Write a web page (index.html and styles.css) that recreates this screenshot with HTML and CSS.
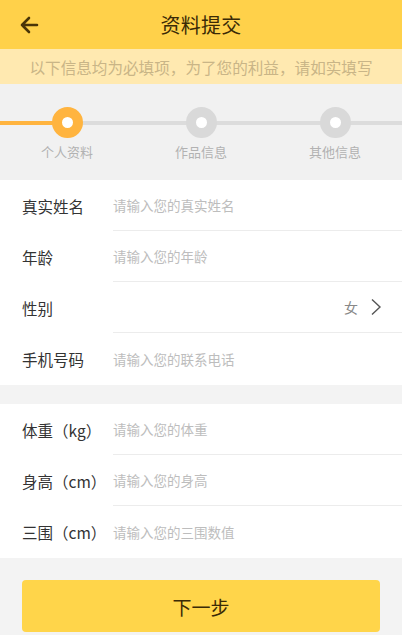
FILE: index.html
```html
<!DOCTYPE html>
<html lang="zh">
<head>
<meta charset="utf-8">
<title>资料提交</title>
<link rel="stylesheet" href="styles.css">
</head>
<body>
<div class="page">
  <header class="topbar">
    <span class="back">
      <svg width="20" height="18" viewBox="0 0 20 18"><path d="M18 9H3M10 2L3 9l7 7" fill="none" stroke="#4a3508" stroke-width="2.6" stroke-linecap="round" stroke-linejoin="round"/></svg>
    </span>
    <h1 class="title">资料提交</h1>
  </header>
  <div class="notice">以下信息均为必填项，为了您的利益，请如实填写</div>
  <div class="steps">
    <div class="step active"><span class="dot"></span><span class="step-label">个人资料</span></div>
    <div class="step"><span class="dot"></span><span class="step-label">作品信息</span></div>
    <div class="step"><span class="dot"></span><span class="step-label">其他信息</span></div>
  </div>
  <section class="group">
    <div class="row"><span class="label">真实姓名</span><span class="field ph">请输入您的真实姓名</span></div>
    <div class="row"><span class="label">年龄</span><span class="field ph">请输入您的年龄</span></div>
    <div class="row"><span class="label">性别</span><span class="field select"><span class="val">女</span><svg width="12" height="18" viewBox="0 0 12 18"><path d="M2 1.5l8 7.5-8 7.5" fill="none" stroke="#555" stroke-width="1.4"/></svg></span></div>
    <div class="row"><span class="label">手机号码</span><span class="field ph">请输入您的联系电话</span></div>
  </section>
  <section class="group second">
    <div class="row"><span class="label">体重（kg）</span><span class="field ph">请输入您的体重</span></div>
    <div class="row"><span class="label">身高（cm）</span><span class="field ph">请输入您的身高</span></div>
    <div class="row"><span class="label">三围（cm）</span><span class="field ph">请输入您的三围数值</span></div>
  </section>
  <div class="actions">
    <button class="next">下一步</button>
  </div>
</div>
</body>
</html>
```
FILE: styles.css
```css
* { box-sizing: border-box; }
html, body { margin: 0; padding: 0; }
body {
  font-family: "Noto Sans CJK SC", "Noto Sans", sans-serif;
  background: #f3f3f3;
  width: 402px;
  height: 635px;
  overflow: hidden;
}
.page { display: flex; flex-direction: column; }
.topbar {
  height: 49px;
  background: #ffd14a;
  display: flex;
  align-items: center;
  justify-content: center;
  position: relative;
}
.back {
  position: absolute;
  left: 19px;
  top: 16px;
  display: flex;
}
.title {
  margin: 0;
  font-size: 20px;
  font-weight: 400;
  color: #3a2a06;
  letter-spacing: 0.3px;
}
.notice {
  height: 35px;
  background: #ffe9b0;
  color: #c9b587;
  font-size: 15.6px;
  display: flex;
  align-items: center;
  justify-content: center;
}
.steps {
  height: 96px;
  background: #f1f1f1;
  display: grid;
  grid-template-columns: 1fr 1fr 1fr;
  position: relative;
}
.steps::before {
  content: "";
  position: absolute;
  left: 0; right: 0;
  top: 37px;
  height: 4px;
  background: linear-gradient(to right, #ffb43f 0, #ffb43f 67px, #dcdcdc 67px);
}
.step {
  display: flex;
  flex-direction: column;
  align-items: center;
  padding-top: 23px;
  position: relative;
}
.dot {
  width: 31px;
  height: 31px;
  border-radius: 50%;
  border: 10px solid #d9d9d9;
  background: #fff;
}
.step.active .dot { border-color: #ffb43f; }
.step-label {
  margin-top: 4px;
  font-size: 13px;
  color: #b2b2b2;
}
.group { background: #fff; padding-bottom: 1px; }
.group.second { margin-top: 19px; }
.row {
  height: 51px;
  display: flex;
  align-items: stretch;
}
.label {
  width: 113px;
  padding-left: 22px;
  font-size: 15.5px;
  color: #333;
  display: flex;
  align-items: center;
  white-space: nowrap;
}
.field {
  flex: 1;
  display: flex;
  align-items: center;
  border-bottom: 1px solid #ececec;
  font-size: 13.5px;
}
.row:last-child .field { border-bottom: none; }
.ph { color: #bdbdbd; }
.select { justify-content: flex-end; padding-right: 20px; gap: 12px; }
.val { color: #888; font-size: 14px; }
.actions { padding: 22px 22px 0; }
.next {
  width: 100%;
  height: 52px;
  border: none;
  border-radius: 4px;
  background: #ffd54a;
  color: #3a2a06;
  font-family: inherit;
  font-size: 19px;
}
```
